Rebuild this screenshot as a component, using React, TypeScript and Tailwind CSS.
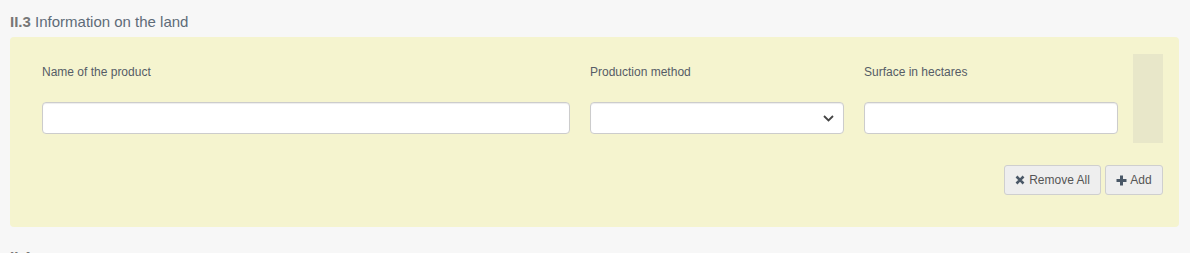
import React from "react";

const TimesIcon = () => (
  <svg width="10" height="10" viewBox="0 0 10 10" className="mr-[4px]">
    <path d="M1.5 1.5 L8.5 8.5 M8.5 1.5 L1.5 8.5" stroke="#4a5867" strokeWidth="2.6" strokeLinecap="butt" />
  </svg>
);

const PlusIcon = () => (
  <svg width="11" height="11" viewBox="0 0 11 11" className="mr-[3px]">
    <path d="M5.5 0.5 V10.5 M0.5 5.5 H10.5" stroke="#4a5867" strokeWidth="3" />
  </svg>
);

const Chevron = () => (
  <svg width="11" height="7" viewBox="0 0 11 7" className="absolute right-[10px] top-[13px]">
    <path d="M1 1 L5.5 5.5 L10 1" fill="none" stroke="#444" strokeWidth="1.8" />
  </svg>
);

const Field = ({ label, width, select }: { label: string; width: string; select?: boolean }) => (
  <div className={`${width} flex flex-col`}>
    <label className="text-[12px] leading-[16px] text-[#555c66] mt-[10px] h-[16px]">{label}</label>
    <div className="relative mt-[22px]">
      <div className="h-[32px] w-full bg-white border border-[#cccccc] rounded-[4px] shadow-[inset_0_1px_1px_rgba(0,0,0,0.075)]" />
      {select && <Chevron />}
    </div>
  </div>
);

const App = () => {
  return (
    <div className="bg-[#f7f7f7] h-[253px] overflow-hidden px-[10px] pt-[12px] font-['Liberation_Sans',Arial,sans-serif]">
      <h3 className="text-[15px] leading-[20px] mb-[5px]">
        <span className="font-bold text-[#777777]">II.3</span>{" "}
        <span className="text-[#5e6b78]">Information on the land</span>
      </h3>

      <div className="bg-[#f5f4cf] rounded-[4px] w-[1169px] px-[16px] pt-[17px] pb-[32px]">
        <div className="flex items-start">
          <div className="flex gap-[20px] pl-[16px]">
            <Field label="Name of the product" width="w-[528px]" />
            <Field label="Production method" width="w-[254px]" select />
            <Field label="Surface in hectares" width="w-[254px]" />
          </div>
          <div className="ml-[15px] w-[30px] h-[89px] bg-[#e8e7c9]" />
        </div>

        <div className="flex justify-end gap-[4px] mt-[22px]">
          <button className="h-[30px] w-[97px] flex items-center justify-center text-[12px] text-[#555] bg-[#eeeeee] border border-[#cfcfcf] rounded-[3px]">
            <TimesIcon />
            Remove All
          </button>
          <button className="h-[30px] w-[58px] flex items-center justify-center text-[12px] text-[#555] bg-[#eeeeee] border border-[#cfcfcf] rounded-[3px]">
            <PlusIcon />
            Add
          </button>
        </div>
      </div>

      <h3 className="text-[15px] leading-[20px] mt-[20px]">
        <span className="font-bold text-[#777777]">II.4</span>
      </h3>
    </div>
  );
};

export default App;
